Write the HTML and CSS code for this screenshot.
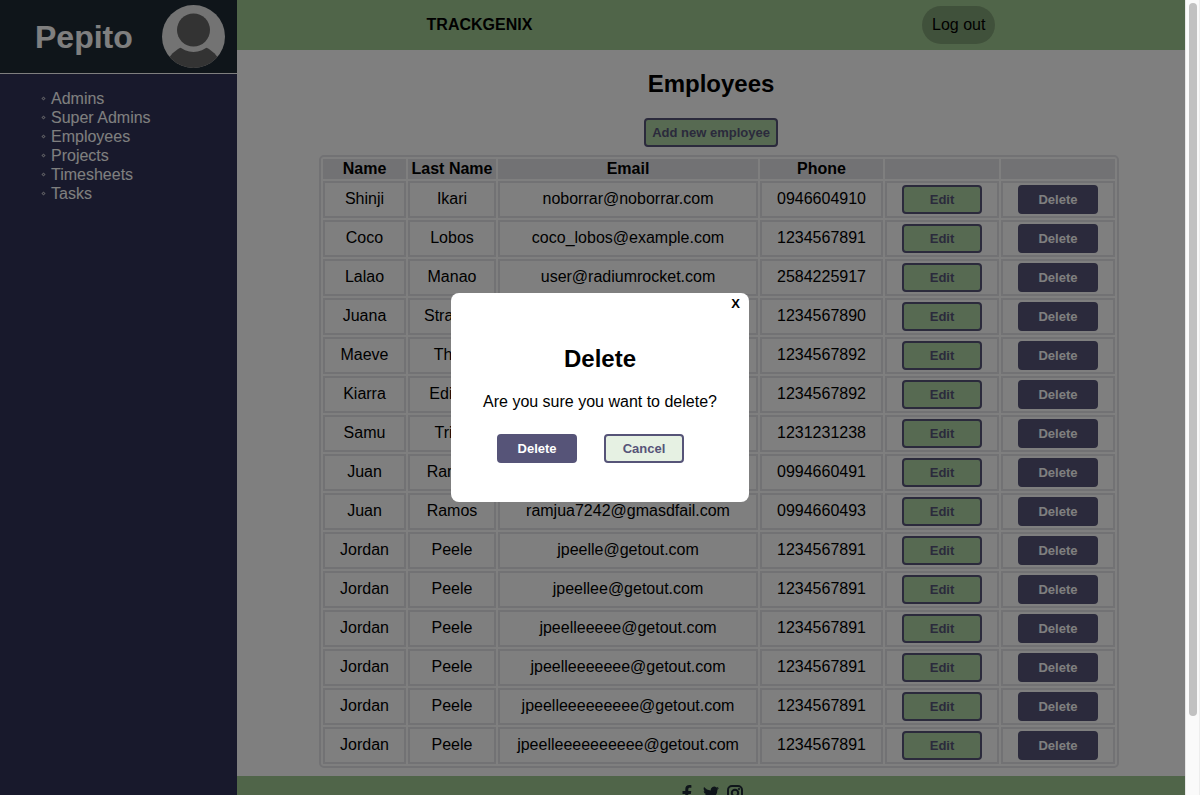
FILE: index.html
```html
<!DOCTYPE html>
<html lang="en">
<head>
<meta charset="utf-8">
<title>Trackgenix - Employees</title>
<link rel="stylesheet" href="styles.css">
</head>
<body>
<div class="viewport">
  <div class="app">
    <aside class="sidebar">
      <div class="profile">
        <h1 class="profile-name">Pepito</h1>
        <svg class="avatar" viewBox="0 0 63 63" aria-hidden="true">
          <defs><clipPath id="disc"><circle cx="31.5" cy="31.5" r="31.5"/></clipPath></defs>
          <g clip-path="url(#disc)">
            <rect width="63" height="63" fill="#e6e6e6"/>
            <circle cx="31.500" cy="69" r="29.500" fill="#666"/>
            <circle cx="31.500" cy="25" r="22" fill="#e6e6e6"/>
            <circle cx="31.500" cy="25" r="16.500" fill="#666"/>
          </g>
        </svg>
      </div>
      <nav>
        <ul class="menu">
          <li><a href="#admins">Admins</a></li>
          <li><a href="#super-admins">Super Admins</a></li>
          <li><a href="#employees">Employees</a></li>
          <li><a href="#projects">Projects</a></li>
          <li><a href="#timesheets">Timesheets</a></li>
          <li><a href="#tasks">Tasks</a></li>
        </ul>
      </nav>
    </aside>
    <div class="page">
      <header class="topbar">
        <span class="brand">TRACKGENIX</span>
        <button class="logout" type="button">Log out</button>
      </header>
      <main class="content">
        <h2 class="title">Employees</h2>
        <button class="btn btn-light btn-wide" type="button">Add new employee</button>
        <div class="table-wrap">
          <table class="employees">
            <colgroup><col class="col-name"><col class="col-last"><col class="col-email"><col class="col-phone"><col class="col-action"><col class="col-action"></colgroup>
            <thead>
              <tr><th>Name</th><th>Last Name</th><th>Email</th><th>Phone</th><th></th><th></th></tr>
            </thead>
            <tbody>
              <tr><td>Shinji</td><td>Ikari</td><td>noborrar@noborrar.com</td><td>0946604910</td><td><button class="btn btn-light" type="button">Edit</button></td><td><button class="btn btn-dark" type="button">Delete</button></td></tr>
              <tr><td>Coco</td><td>Lobos</td><td>coco_lobos@example.com</td><td>1234567891</td><td><button class="btn btn-light" type="button">Edit</button></td><td><button class="btn btn-dark" type="button">Delete</button></td></tr>
              <tr><td>Lalao</td><td>Manao</td><td>user@radiumrocket.com</td><td>2584225917</td><td><button class="btn btn-light" type="button">Edit</button></td><td><button class="btn btn-dark" type="button">Delete</button></td></tr>
              <tr><td>Juana</td><td>Strange</td><td></td><td>1234567890</td><td><button class="btn btn-light" type="button">Edit</button></td><td><button class="btn btn-dark" type="button">Delete</button></td></tr>
              <tr><td>Maeve</td><td>Theo</td><td></td><td>1234567892</td><td><button class="btn btn-light" type="button">Edit</button></td><td><button class="btn btn-dark" type="button">Delete</button></td></tr>
              <tr><td>Kiarra</td><td>Edited</td><td></td><td>1234567892</td><td><button class="btn btn-light" type="button">Edit</button></td><td><button class="btn btn-dark" type="button">Delete</button></td></tr>
              <tr><td>Samu</td><td>Tries</td><td></td><td>1231231238</td><td><button class="btn btn-light" type="button">Edit</button></td><td><button class="btn btn-dark" type="button">Delete</button></td></tr>
              <tr><td>Juan</td><td>Ramos</td><td></td><td>0994660491</td><td><button class="btn btn-light" type="button">Edit</button></td><td><button class="btn btn-dark" type="button">Delete</button></td></tr>
              <tr><td>Juan</td><td>Ramos</td><td>ramjua7242@gmasdfail.com</td><td>0994660493</td><td><button class="btn btn-light" type="button">Edit</button></td><td><button class="btn btn-dark" type="button">Delete</button></td></tr>
              <tr><td>Jordan</td><td>Peele</td><td>jpeelle@getout.com</td><td>1234567891</td><td><button class="btn btn-light" type="button">Edit</button></td><td><button class="btn btn-dark" type="button">Delete</button></td></tr>
              <tr><td>Jordan</td><td>Peele</td><td>jpeellee@getout.com</td><td>1234567891</td><td><button class="btn btn-light" type="button">Edit</button></td><td><button class="btn btn-dark" type="button">Delete</button></td></tr>
              <tr><td>Jordan</td><td>Peele</td><td>jpeelleeeee@getout.com</td><td>1234567891</td><td><button class="btn btn-light" type="button">Edit</button></td><td><button class="btn btn-dark" type="button">Delete</button></td></tr>
              <tr><td>Jordan</td><td>Peele</td><td>jpeelleeeeeee@getout.com</td><td>1234567891</td><td><button class="btn btn-light" type="button">Edit</button></td><td><button class="btn btn-dark" type="button">Delete</button></td></tr>
              <tr><td>Jordan</td><td>Peele</td><td>jpeelleeeeeeeee@getout.com</td><td>1234567891</td><td><button class="btn btn-light" type="button">Edit</button></td><td><button class="btn btn-dark" type="button">Delete</button></td></tr>
              <tr><td>Jordan</td><td>Peele</td><td>jpeelleeeeeeeeee@getout.com</td><td>1234567891</td><td><button class="btn btn-light" type="button">Edit</button></td><td><button class="btn btn-dark" type="button">Delete</button></td></tr>
            </tbody>
          </table>
        </div>
      </main>
      <footer class="footer">
        <a href="#facebook" aria-label="Facebook"><svg viewBox="0 0 16 16"><path d="M9.300 16V9h2.500l.5-3h-3V4.300c0-.9.400-1.500 1.600-1.500h1.500V.2C12 .1 11.200 0 10.300 0 7.900 0 6.300 1.400 6.300 3.900V6H3.500v3h2.800v7z"/></svg></a>
        <a href="#twitter" aria-label="Twitter"><svg viewBox="0 0 24 24"><path d="M23.950 4.570a10 10 0 0 1-2.820.775 4.960 4.960 0 0 0 2.160-2.723c-.950.555-2.005.959-3.127 1.184a4.920 4.920 0 0 0-8.384 4.482C7.690 8.095 4.070 6.130 1.640 3.162a4.820 4.820 0 0 0-.666 2.475c0 1.710.870 3.213 2.188 4.096a4.900 4.900 0 0 1-2.228-.616v.060a4.920 4.920 0 0 0 3.946 4.827 5 5 0 0 1-2.212.085 4.940 4.940 0 0 0 4.604 3.417A9.870 9.870 0 0 1 0 19.540a13.940 13.940 0 0 0 7.550 2.209c9.053 0 13.998-7.496 13.998-13.985 0-.210 0-.420-.015-.630a9.940 9.940 0 0 0 2.417-2.564z"/></svg></a>
        <a href="#instagram" aria-label="Instagram"><svg viewBox="0 0 16 16"><rect x="1" y="1" width="14" height="14" rx="4" class="line"/><circle cx="8" cy="8" r="3.200" class="line"/><circle cx="12" cy="4" r="1.100"/></svg></a>
      </footer>
    </div>
    <div class="overlay"></div>
  </div>
  <div class="scroll-track"><div class="scroll-thumb"></div></div>
  <div class="modal-layer">
    <section class="modal" role="dialog" aria-modal="true" aria-labelledby="modal-title">
      <button class="close" type="button" aria-label="Close">X</button>
      <h2 class="title" id="modal-title">Delete</h2>
      <p class="message">Are you sure you want to delete?</p>
      <div class="modal-actions">
        <button class="btn btn-dark" type="button">Delete</button>
        <button class="btn btn-pale" type="button">Cancel</button>
      </div>
    </section>
  </div>
</div>
</body>
</html>
```

FILE: styles.css
```css
*,
*::before {
  box-sizing: border-box;
}

body {
  margin: 0;
  font: 16px/19px "Liberation Sans", Arial, sans-serif;
  color: #000;
  background: #fff;
}

h1, h2, p, ul {
  margin: 0;
  padding: 0;
}

button {
  font-family: inherit;
  cursor: pointer;
}

a {
  color: inherit;
  text-decoration: none;
}

.viewport {
  position: relative;
  display: flex;
  height: 100vh;
  overflow: hidden;
}

.app {
  position: relative;
  display: flex;
  flex: 1;
  min-width: 0;
  overflow: hidden;
}

.sidebar {
  width: 20%;
  background: #303358;
  color: #fff;
}

.profile {
  display: flex;
  align-items: center;
  justify-content: space-between;
  padding: 5px 12px 5px 35px;
  border-bottom: 1px solid #fff;
  background: #1f2b35;
}

.profile-name {
  font-size: 32px;
  line-height: 36px;
}

.avatar {
  width: 63px;
  height: 63px;
}

.menu {
  padding: 15px 0 0 42px;
  list-style: none;
}

.menu li {
  display: flex;
  align-items: center;
  gap: 6px;
}

.menu li::before {
  content: "";
  width: 3px;
  height: 3px;
  border: 1px solid #b4b4c0;
  transform: rotate(45deg);
}

.page {
  flex: 1;
  min-width: 0;
}

.topbar {
  display: flex;
  align-items: center;
  justify-content: space-between;
  height: 50px;
  padding: 0 20%;
  background: #a1ca93;
}

.brand {
  padding-bottom: 2px;
  font-weight: bold;
}

.logout {
  height: 38px;
  padding: 0 10px;
  border: 0;
  border-radius: 19px;
  background: #81a276;
  font-size: 16px;
}

.content {
  display: flex;
  flex-direction: column;
  align-items: center;
  padding: 20px 0 8px;
}

.title {
  font-size: 24px;
  line-height: 28px;
}

.content .title {
  margin-bottom: 20px;
}

.btn {
  width: 80px;
  height: 29px;
  padding: 0;
  border: 2px solid #565478;
  border-radius: 4px;
  font-size: 13px;
  font-weight: bold;
}

.btn-light {
  background: #aed4a4;
  color: #565478;
}

.btn-dark {
  background: #565478;
  color: #fff;
}

.btn-pale {
  background: #e6f1e3;
  color: #565478;
}

.btn-wide {
  width: auto;
  padding: 0 6px;
}

.table-wrap {
  padding: 8px 0 0 16px;
}

.employees {
  border: 2px solid #e4e4e8;
  border-radius: 5px;
  border-spacing: 2px;
  text-align: center;
}

.employees th {
  height: 20px;
  padding: 0;
  background: #e4e4e8;
  line-height: 20px;
  vertical-align: top;
}

.employees td {
  padding: 2px;
  border: 2px solid #e4e4e8;
  line-height: 27px;
  vertical-align: top;
}

.employees .btn {
  display: block;
  margin: 0 auto;
}

.col-name { width: 83px; }
.col-last { width: 88px; }
.col-email { width: 260px; }
.col-phone { width: 123px; }
.col-action { width: 114px; }

.footer {
  display: flex;
  justify-content: center;
  gap: 8px;
  height: 50px;
  padding-top: 9px;
  background: #a1ca93;
}

.footer svg {
  display: block;
  width: 16px;
  height: 16px;
  fill: #1f2b35;
}

.footer .line {
  fill: none;
  stroke: #1f2b35;
  stroke-width: 2;
}

.overlay {
  position: absolute;
  inset: 0;
  background: rgba(0, 0, 0, 0.5);
}

.scroll-track {
  width: 15px;
  padding: 3px 3px 0;
  border-left: 1px solid #e6e6e6;
  border-right: 1px solid #ededed;
  background: #fafafa;
}

.scroll-thumb {
  width: 8px;
  height: 90%;
  border-radius: 4px;
  background: #c1c1c1;
}

.modal-layer {
  position: absolute;
  inset: 0;
  display: flex;
  align-items: center;
  justify-content: center;
}

.modal {
  position: relative;
  padding: 52px 32px 39px;
  border-radius: 8px;
  background: #fff;
  text-align: center;
}

.close {
  position: absolute;
  top: 2px;
  right: 9px;
  padding: 0;
  border: 0;
  background: none;
  font-size: 13px;
  line-height: 17px;
  font-weight: bold;
}

.message {
  margin: 19px 0 23px;
}

.modal-actions {
  display: flex;
  gap: 27px;
  padding-left: 14px;
}
```
